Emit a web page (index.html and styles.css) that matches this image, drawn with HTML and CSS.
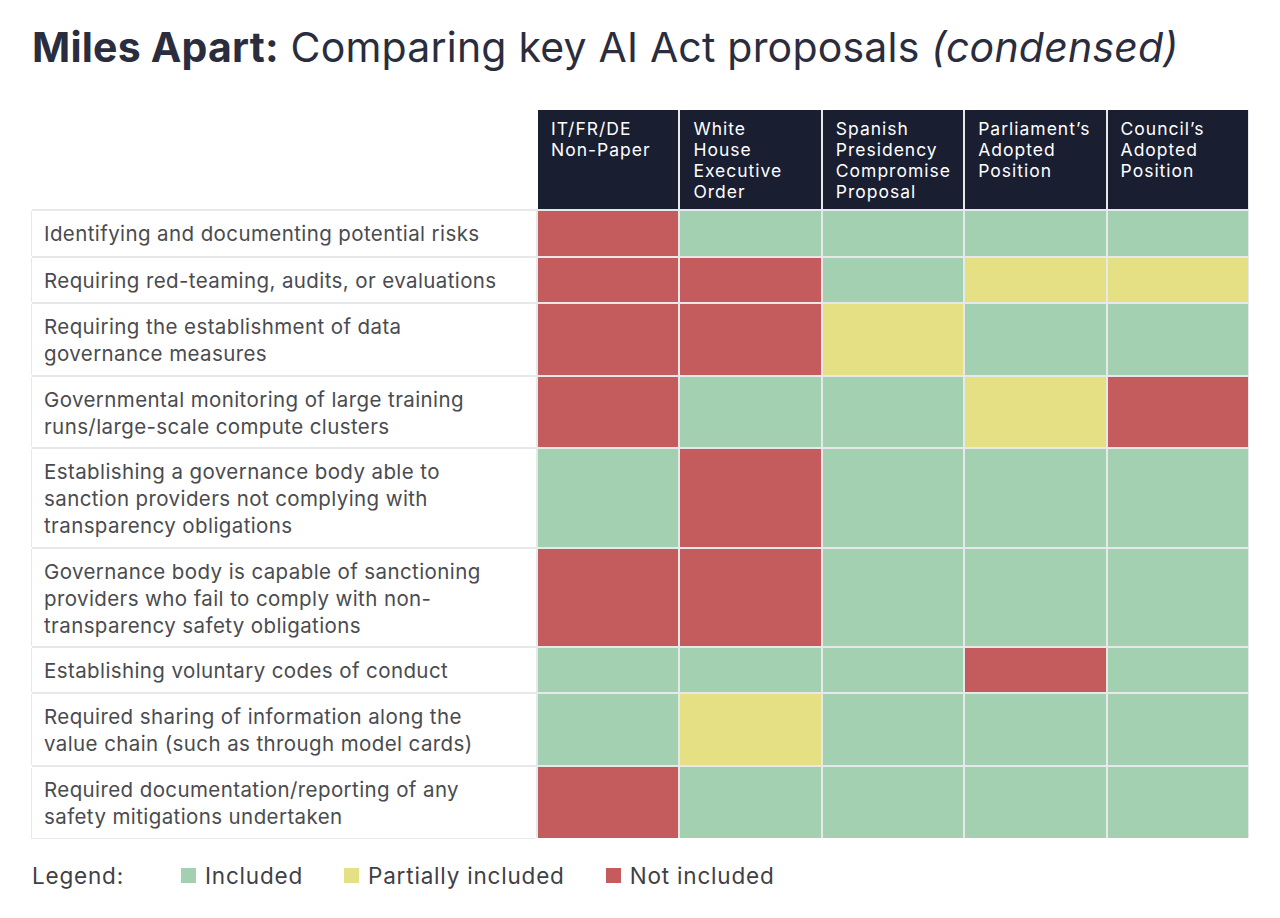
FILE: index.html
```html
<!DOCTYPE html>
<html>
<head>
<meta charset="utf-8">
<link rel="stylesheet" href="styles.css">
</head>
<body>
<div class="page">
  <h1 class="title"><b>Miles Apart:</b> Comparing key AI Act proposals <i>(condensed)</i></h1>
  <div class="grid">
    <div class="corner"></div>
    <div class="head">IT/FR/DE<br>Non-Paper</div>
    <div class="head">White<br>House<br>Executive<br>Order</div>
    <div class="head">Spanish<br>Presidency<br>Compromise<br>Proposal</div>
    <div class="head">Parliament’s<br>Adopted<br>Position</div>
    <div class="head">Council’s<br>Adopted<br>Position</div>

    <div class="label">Identifying and documenting potential risks</div>
    <div class="c r"></div><div class="c g"></div><div class="c g"></div><div class="c g"></div><div class="c g"></div>

    <div class="label">Requiring red-teaming, audits, or evaluations</div>
    <div class="c r"></div><div class="c r"></div><div class="c g"></div><div class="c y"></div><div class="c y"></div>

    <div class="label">Requiring the establishment of data<br>governance measures</div>
    <div class="c r"></div><div class="c r"></div><div class="c y"></div><div class="c g"></div><div class="c g"></div>

    <div class="label">Governmental monitoring of large training<br>runs/large-scale compute clusters</div>
    <div class="c r"></div><div class="c g"></div><div class="c g"></div><div class="c y"></div><div class="c r"></div>

    <div class="label">Establishing a governance body able to<br>sanction providers not complying with<br>transparency obligations</div>
    <div class="c g"></div><div class="c r"></div><div class="c g"></div><div class="c g"></div><div class="c g"></div>

    <div class="label">Governance body is capable of sanctioning<br>providers who fail to comply with non-<br>transparency safety obligations</div>
    <div class="c r"></div><div class="c r"></div><div class="c g"></div><div class="c g"></div><div class="c g"></div>

    <div class="label">Establishing voluntary codes of conduct</div>
    <div class="c g"></div><div class="c g"></div><div class="c g"></div><div class="c r"></div><div class="c g"></div>

    <div class="label">Required sharing of information along the<br>value chain (such as through model cards)</div>
    <div class="c g"></div><div class="c y"></div><div class="c g"></div><div class="c g"></div><div class="c g"></div>

    <div class="label last">Required documentation/reporting of any<br>safety mitigations undertaken</div>
    <div class="c r"></div><div class="c g"></div><div class="c g"></div><div class="c g"></div><div class="c g"></div>
  </div>
  <div class="legend">
    <span class="legend-title">Legend:</span>
    <span class="item"><span class="sw g"></span>Included</span>
    <span class="item"><span class="sw y"></span>Partially included</span>
    <span class="item"><span class="sw r"></span>Not included</span>
  </div>
</div>
</body>
</html>
```

FILE: styles.css
```css
* { box-sizing: border-box; }
html, body { margin: 0; padding: 0; background: #ffffff; }
body { font-family: Inter, "Noto Sans", "Liberation Sans", sans-serif; color: #2b2e3f; }
.page { padding: 22px 0 0 32px; width: 1280px; height: 918px; }
.title {
  margin: 0;
  font-size: 41px;
  line-height: 50px;
  font-weight: 400;
  color: #2a2d3d;
  letter-spacing: 0.2px;
}
.title b { font-weight: 700; }
.title i { font-style: italic; }
.grid {
  margin-top: 38px;
  display: grid;
  grid-template-columns: 504px repeat(5, 140.4px);
  grid-template-rows: 99px 45px 44px 71px 70px 98px 97px 44px 71px 71px;
  gap: 2px;
  background: #e6e8ea;
  width: 1217px;
}
.corner { background: #ffffff; width: 506px; }
.head {
  background: #1a1e31;
  color: #ffffff;
  font-size: 17.5px;
  line-height: 21px;
  letter-spacing: 1px;
  padding: 8px 0 0 13px;
}
.label {
  background: #ffffff;
  color: #4a4b4f;
  font-size: 20.5px;
  line-height: 27px;
  letter-spacing: 0.4px;
  padding: 9px 0 0 12px;
  box-shadow: -1px 0 0 #e6e8ea;
}
.label.last { box-shadow: -1px 1px 0 #e6e8ea; }
.c.r, .sw.r { background: #c45c5e; }
.c.g, .sw.g { background: #a4d0b2; }
.c.y, .sw.y { background: #e6e085; }
.legend {
  display: flex;
  align-items: center;
  margin-top: 24px;
  font-size: 22.5px;
  letter-spacing: 0.8px;
  color: #3f4046;
}
.legend-title { width: 149px; }
.item { display: flex; align-items: center; margin-right: 41px; }
.sw { width: 15px; height: 15px; margin-right: 9px; display: inline-block; }
```
